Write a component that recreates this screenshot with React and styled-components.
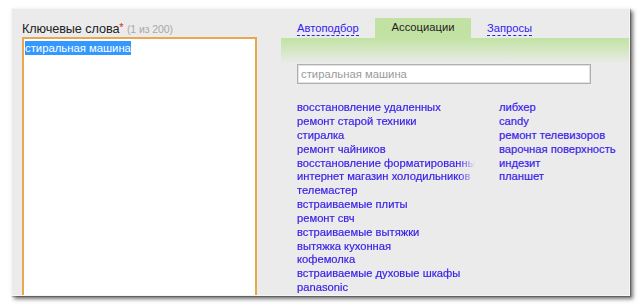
import React from 'react';
import styled, { createGlobalStyle } from 'styled-components';

const GlobalStyle = createGlobalStyle`
  html, body {
    margin: 0;
    padding: 0;
    background: #ffffff;
    font-family: "Liberation Sans", Arial, sans-serif;
  }
`;

const leftWords = [
  'восстановление удаленных',
  'ремонт старой техники',
  'стиралка',
  'ремонт чайников',
  'восстановление форматированных',
  'интернет магазин холодильников',
  'телемастер',
  'встраиваемые плиты',
  'ремонт свч',
  'встраиваемые вытяжки',
  'вытяжка кухонная',
  'кофемолка',
  'встраиваемые духовые шкафы',
  'panasonic'
];

const rightWords = [
  'либхер',
  'candy',
  'ремонт телевизоров',
  'варочная поверхность',
  'индезит',
  'планшет'
];

const tabs = [
  { title: 'Автоподбор', width: 94 },
  { title: 'Ассоциации', width: 96, active: true },
  { title: 'Запросы', width: 80 }
];

const App = () => {
  return (
    <>
      <GlobalStyle />
      <Page>
        <Panel>
          <LeftCol>
            <Label>
              Ключевые слова<Star>*</Star> <Counter>(1 из 200)</Counter>
            </Label>
            <KeywordsBox>
              <Selected>стиральная машина</Selected>
            </KeywordsBox>
          </LeftCol>
          <RightCol>
            <Tabs>
              {tabs.map(t => (
                <Tab key={t.title} active={t.active} width={t.width}>
                  <TabText active={t.active}>{t.title}</TabText>
                </Tab>
              ))}
            </Tabs>
            <GreenBand />
            <SearchInput>стиральная машина</SearchInput>
            <Words>
              <WordCol clip>
                {leftWords.map(w => (
                  <Word key={w}>{w}</Word>
                ))}
              </WordCol>
              <WordCol>
                {rightWords.map(w => (
                  <Word key={w}>{w}</Word>
                ))}
              </WordCol>
            </Words>
          </RightCol>
        </Panel>
      </Page>
    </>
  );
};

export default App;

// styled components
const Page = styled.div`
  width: 644px;
  height: 307px;
  padding: 8px 0 0 11px;
  box-sizing: border-box;
  overflow: hidden;
`;

const Panel = styled.div`
  width: 619px;
  height: 288px;
  box-sizing: border-box;
  background: #ebebeb;
  border: 1px solid #f6f6f6;
  box-shadow: 3px 3px 4px rgba(0, 0, 0, 0.55), 1px 1px 1px rgba(0, 0, 0, 0.25);
  display: flex;
  overflow: hidden;
`;

const LeftCol = styled.div`
  width: 269px;
  padding: 11px 0 0 10px;
  box-sizing: border-box;
  display: flex;
  flex-direction: column;
`;

const Label = styled.div`
  font-size: 12.7px;
  letter-spacing: -0.1px;
  color: #222;
  height: 17px;
  line-height: 14px;
`;

const Star = styled.span`
  color: #e02020;
  vertical-align: 2px;
  font-size: 11px;
`;

const Counter = styled.span`
  color: #a8a8a8;
  font-size: 10.5px;
`;

const KeywordsBox = styled.div`
  width: 235px;
  flex: 1;
  box-sizing: border-box;
  background: #fff;
  border: 2px solid #eaa84e;
  border-bottom: none;
  padding: 2px 1px;
  font-size: 11.3px;
  line-height: 14px;
`;

const Selected = styled.span`
  background: #3399ff;
  color: #fff;
  padding: 1px 0;
`;

const RightCol = styled.div`
  flex: 1;
  padding-top: 9px;
  display: flex;
  flex-direction: column;
`;

const Tabs = styled.div`
  display: flex;
  height: 22px;
`;

const Tab = styled.div`
  width: ${p => p.width}px;
  box-sizing: border-box;
  padding-left: ${p => (p.active ? '0' : '16px')};
  background: ${p => (p.active ? '#c2e2a3' : 'transparent')};
  display: flex;
  align-items: center;
  justify-content: ${p => (p.active ? 'center' : 'flex-start')};
  font-size: 11.2px;
`;

const TabText = styled.span`
  color: ${p => (p.active ? '#222' : '#3322ee')};
  border-bottom: ${p => (p.active ? 'none' : '1px dashed #3322ee')};
  line-height: 13px;
  margin-top: ${p => (p.active ? '-2px' : '2px')};
`;

const GreenBand = styled.div`
  height: 28px;
  background: linear-gradient(#c2e2a3 0%, #cfe6bb 35%, #ebebeb 100%);
`;

const SearchInput = styled.div`
  margin: 0 0 17px 16px;
  width: 294px;
  height: 20px;
  box-sizing: border-box;
  background: #fff;
  border: 1px solid #b0b0b0;
  box-shadow: inset 0 0 0 1px #e2e2e2;
  color: #9a9a9a;
  font-size: 11.3px;
  line-height: 18px;
  padding-left: 3px;
`;

const Words = styled.div`
  display: flex;
  padding-left: 16px;
`;

const WordCol = styled.div`
  width: ${p => (p.clip ? '202px' : 'auto')};
  display: flex;
  flex-direction: column;
  ${p =>
    p.clip &&
    `
    overflow: hidden;
    -webkit-mask-image: linear-gradient(to right, #000 162px, transparent 178px);
    mask-image: linear-gradient(to right, #000 162px, transparent 178px);
  `}
`;

const Word = styled.div`
  font-size: 11.2px;
  line-height: 13.85px;
  color: #3a22ea;
  -webkit-text-stroke: 0.2px #3a22ea;
  white-space: nowrap;
`;
